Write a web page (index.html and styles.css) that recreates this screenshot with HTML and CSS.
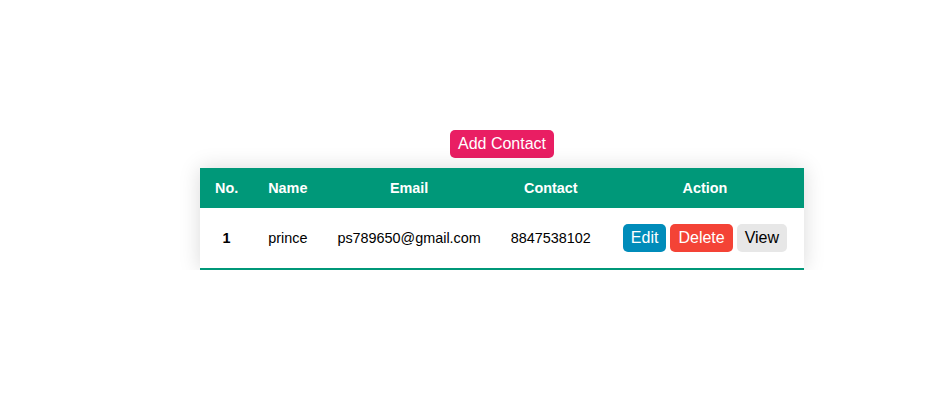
FILE: index.html
```html
<!DOCTYPE html>
<html lang="en">
<head>
<meta charset="utf-8">
<title>Contacts</title>
<link rel="stylesheet" href="styles.css">
</head>
<body>
<div class="wrap">
  <button class="btn btn-add">Add Contact</button>
  <table class="styled-table">
    <thead>
      <tr><th>No.</th><th>Name</th><th>Email</th><th>Contact</th><th>Action</th></tr>
    </thead>
    <tbody>
      <tr>
        <th scope="row">1</th>
        <td>prince</td>
        <td>ps789650@gmail.com</td>
        <td>8847538102</td>
        <td class="actions"><button class="btn btn-edit">Edit</button><button class="btn btn-delete">Delete</button><button class="btn btn-view">View</button></td>
      </tr>
    </tbody>
  </table>
</div>
</body>
</html>
```
FILE: styles.css
```css
html, body {
  margin: 0;
  padding: 0;
  background: #ffffff;
}
body {
  font-family: "Liberation Sans", Arial, sans-serif;
}
.wrap {
  display: flex;
  flex-direction: column;
  align-items: center;
  gap: 10px;
  width: fit-content;
  margin-left: 200px;
  padding-top: 130px;
}
.btn {
  font-family: "Liberation Sans", Arial, sans-serif;
  font-size: 16px;
  line-height: 18px;
  border: none;
  border-radius: 5px;
  padding: 5px 8px;
  cursor: pointer;
  color: #ffffff;
}
.btn-add {
  background: #e91e63;
}
.styled-table {
  border-collapse: collapse;
  font-size: 14.4px;
  box-shadow: 0 0 20px rgba(0, 0, 0, 0.15);
}
.styled-table thead tr {
  background: #009879;
  color: #ffffff;
}
.styled-table th,
.styled-table td {
  padding: 12px 15px;
  text-align: center;
  line-height: 16px;
}
.styled-table tbody tr {
  border-bottom: 2px solid #009879;
  color: #000000;
}
.actions .btn {
  margin: 4px 2px;
  vertical-align: middle;
}
.btn-edit { background: #008cba; }
.btn-delete { background: #f44336; }
.btn-view { background: #e7e7e7; color: #000000; }
```
